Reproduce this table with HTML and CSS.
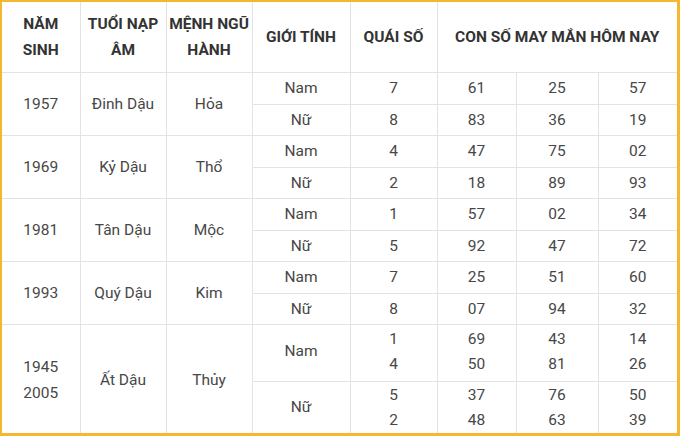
FILE: index.html
```html
<!DOCTYPE html>
<html lang="vi">
<head>
<meta charset="utf-8">
<link rel="stylesheet" href="styles.css">
</head>
<body>
<div class="frame">
<table class="tbl">
  <colgroup>
    <col class="c1"><col class="c2"><col class="c3"><col class="c4"><col class="c5"><col class="c6"><col class="c7"><col class="c8">
  </colgroup>
  <thead>
    <tr class="head">
      <th>NĂM<br>SINH</th>
      <th>TUỔI NẠP<br>ÂM</th>
      <th>MỆNH NGŨ<br>HÀNH</th>
      <th>GIỚI TÍNH</th>
      <th>QUÁI SỐ</th>
      <th colspan="3">CON SỐ MAY MẮN HÔM NAY</th>
    </tr>
  </thead>
  <tbody>
    <tr class="ra"><td rowspan="2">1957</td><td rowspan="2">Đinh Dậu</td><td rowspan="2">Hỏa</td><td>Nam</td><td>7</td><td>61</td><td>25</td><td>57</td></tr>
    <tr class="rb"><td>Nữ</td><td>8</td><td>83</td><td>36</td><td>19</td></tr>
    <tr class="ra"><td rowspan="2">1969</td><td rowspan="2">Kỷ Dậu</td><td rowspan="2">Thổ</td><td>Nam</td><td>4</td><td>47</td><td>75</td><td>02</td></tr>
    <tr class="rb"><td>Nữ</td><td>2</td><td>18</td><td>89</td><td>93</td></tr>
    <tr class="ra"><td rowspan="2">1981</td><td rowspan="2">Tân Dậu</td><td rowspan="2">Mộc</td><td>Nam</td><td>1</td><td>57</td><td>02</td><td>34</td></tr>
    <tr class="rb"><td>Nữ</td><td>5</td><td>92</td><td>47</td><td>72</td></tr>
    <tr class="ra"><td rowspan="2">1993</td><td rowspan="2">Quý Dậu</td><td rowspan="2">Kim</td><td>Nam</td><td>7</td><td>25</td><td>51</td><td>60</td></tr>
    <tr class="rb"><td>Nữ</td><td>8</td><td>07</td><td>94</td><td>32</td></tr>
    <tr class="rc"><td rowspan="2">1945<br>2005</td><td rowspan="2">Ất Dậu</td><td rowspan="2">Thủy</td><td>Nam</td><td>1<br>4</td><td>69<br>50</td><td>43<br>81</td><td>14<br>26</td></tr>
    <tr class="rd"><td>Nữ</td><td>5<br>2</td><td>37<br>48</td><td>76<br>63</td><td>50<br>39</td></tr>
  </tbody>
</table>
</div>
</body>
</html>
```
FILE: styles.css
```css
html, body {
  margin: 0;
  padding: 0;
  background: #ffffff;
}
body {
  font-family: Roboto, "Liberation Sans", Arial, sans-serif;
}
.frame {
  width: 680px;
  height: 436px;
  box-sizing: border-box;
  border-style: solid;
  border-color: #f5b630;
  border-width: 2px 3px 3px 2px;
  overflow: hidden;
  background: #fff;
}
.tbl {
  width: 675px;
  border-collapse: collapse;
  table-layout: fixed;
  font-size: 15.5px;
  color: #474747;
}
.c1 { width: 78px; }
.c2 { width: 86px; }
.c3 { width: 86px; }
.c4 { width: 98px; }
.c5 { width: 87px; }
.c6 { width: 79px; }
.c7 { width: 82px; }
.c8 { width: 79px; }
.tbl th, .tbl td {
  border: 1px solid #e3e3e6;
  text-align: center;
  vertical-align: middle;
  padding: 0 2px;
  line-height: 26px;
}
.tbl tr > :first-child { border-left: none; }
.tbl tr > :last-child { border-right: none; }
.tbl thead th { border-top: none; }
.tbl tbody tr:last-child td,
.tbl tbody tr.rc td[rowspan] { border-bottom: none; }
.tbl th {
  font-weight: 700;
  color: #333;
  font-size: 15.5px;
}
.head { height: 70px; }
.ra { height: 32px; }
.rb { height: 31px; }
.rc { height: 57px; }
.rd { height: 53px; }
.ra td, .rb td { line-height: 20px; padding-top: 0; padding-bottom: 0; }
.rc td, .rd td { line-height: 25px; }
.rc td[rowspan] { line-height: 26px; padding-top: 2px; }
.rc td:not([rowspan]) { padding-bottom: 2px; }
```
